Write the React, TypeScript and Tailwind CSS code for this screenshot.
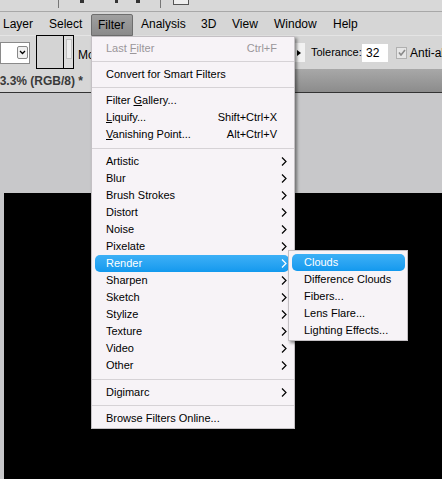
import React from "react";

const Chevron = ({ color = "#000" }: { color?: string }) => (
  <svg width="6" height="9" viewBox="0 0 6 9" className="shrink-0">
    <polyline points="1,0.5 5,4.5 1,8.5" fill="none" stroke={color} strokeWidth="1.2" />
  </svg>
);

type Item =
  | { kind: "sep"; tall?: boolean }
  | { kind: "item"; label: React.ReactNode; shortcut?: string; arrow?: boolean; disabled?: boolean; active?: boolean };

const items: Item[] = [
  { kind: "item", label: <>Last <u>F</u>ilter</>, shortcut: "Ctrl+F", disabled: true },
  { kind: "sep" },
  { kind: "item", label: "Convert for Smart Filters" },
  { kind: "sep" },
  { kind: "item", label: <>Filter <u>G</u>allery...</> },
  { kind: "item", label: <><u>L</u>iquify...</>, shortcut: "Shift+Ctrl+X" },
  { kind: "item", label: <><u>V</u>anishing Point...</>, shortcut: "Alt+Ctrl+V" },
  { kind: "sep", tall: true },
  { kind: "item", label: "Artistic", arrow: true },
  { kind: "item", label: "Blur", arrow: true },
  { kind: "item", label: "Brush Strokes", arrow: true },
  { kind: "item", label: "Distort", arrow: true },
  { kind: "item", label: "Noise", arrow: true },
  { kind: "item", label: "Pixelate", arrow: true },
  { kind: "item", label: "Render", arrow: true, active: true },
  { kind: "item", label: "Sharpen", arrow: true },
  { kind: "item", label: "Sketch", arrow: true },
  { kind: "item", label: "Stylize", arrow: true },
  { kind: "item", label: "Texture", arrow: true },
  { kind: "item", label: "Video", arrow: true },
  { kind: "item", label: "Other", arrow: true },
  { kind: "sep", tall: true },
  { kind: "item", label: "Digimarc", arrow: true },
  { kind: "sep" },
  { kind: "item", label: "Browse Filters Online..." },
];

const sub = ["Clouds", "Difference Clouds", "Fibers...", "Lens Flare...", "Lighting Effects..."];

export default function App() {
  return (
    <div className="relative w-[442px] h-[479px] overflow-hidden bg-[#c8c8ca] flex flex-col font-['Liberation_Sans',Arial,sans-serif] text-[11px] text-black leading-none">
      {/* top strip */}
      <div className="h-[12px] shrink-0 bg-[#d8d8d8] border-b border-[#a8a8a8] flex items-start">
        <div className="ml-[58px] w-px h-[8px] bg-[#777]" />
        <div className="ml-[21px] w-[4px] h-[3px] bg-[#333]" />
        <div className="ml-[31px] w-[3px] h-[3px] bg-[#333]" />
        <div className="ml-[18px] w-[4px] h-[3px] bg-[#333]" />
        <div className="ml-[20px] w-px h-[8px] bg-[#777]" />
        <div className="ml-[12px] w-[16px] h-[5px] border border-t-0 border-[#555] bg-[#eee]" />
      </div>

      {/* menu bar */}
      <div className="h-[24px] shrink-0 bg-[#d6d6d6] flex items-center text-[12px] border-b border-[#e4e4e4]">
        <div className="w-[46px] pl-[3px]">Layer</div>
        <div className="w-[45px] pl-[3px]">Select</div>
        <div className="w-[42px] h-[22px] mt-[2px] self-start pl-[6px] flex items-center rounded-t-[2px] border border-[#6e6e6e] bg-linear-to-b from-[#a0a0a0] to-[#8a8a8a]">Filter</div>
        <div className="w-[62px] pl-[8px]">Analysis</div>
        <div className="w-[31px] pl-[6px]">3D</div>
        <div className="w-[42px] pl-[6px]">View</div>
        <div className="w-[53px] pl-[6px]">Window</div>
        <div className="pl-[12px]">Help</div>
      </div>

      {/* options bar */}
      <div className="h-[33px] shrink-0 bg-[#d6d6d6] flex items-center">
        <div className="shrink-0 w-[30px] h-[22px] bg-white border border-[#8a8a8a] flex items-center justify-end pr-[1px]">
          <div className="w-[11px] h-[13px] border border-[#888] rounded-[2px] bg-[#f0f0f0] flex items-center justify-center">
            <svg width="7" height="5" viewBox="0 0 7 5"><polyline points="1,1 3.5,3.5 6,1" fill="none" stroke="#000" strokeWidth="1.3" /></svg>
          </div>
        </div>
        <div className="shrink-0 ml-[6px] w-[38px] h-[34px] self-start -mt-[1px] border border-black bg-[#d4d4d4] flex justify-end">
          <div className="w-[10px] h-full border-l border-black bg-[#dcdcdc] flex justify-center pt-[3px]">
            <div className="w-[6px] h-[20px] bg-[#eeeeee] border border-[#c0c0c0]" />
          </div>
        </div>
        <div className="shrink-0 ml-[4px] mt-[4px] w-[17px] text-[12px] whitespace-nowrap">Mo</div>
        <div className="shrink-0 ml-[197px] flex items-center">
          <div className="w-[13px] h-[19px] bg-[#f2f2f2] flex items-center justify-center">
            <svg width="4" height="6" viewBox="0 0 4 6"><polygon points="0,0 4,3 0,6" fill="#000" /></svg>
          </div>
          <div className="ml-[6px] text-[11px] w-[51px]">Tolerance:</div>
          <div className="w-[26px] h-[18px] bg-white flex items-center pl-[4px] text-[12px]">32</div>
          <div className="ml-[8px] w-[11px] h-[12px] bg-[#e6e6e6] border border-[#b0b0b0] flex items-center justify-center">
            <svg width="8" height="7" viewBox="0 0 8 7"><polyline points="1,3.5 3,6 7,1" fill="none" stroke="#8a8a8a" strokeWidth="1.6" /></svg>
          </div>
          <div className="ml-[3px] text-[12px] whitespace-nowrap">Anti-alias</div>
        </div>
      </div>

      {/* tab bar */}
      <div className="h-[23px] shrink-0 bg-linear-to-b from-[#a8a8a8] to-[#8c8c8c] flex">
        <div className="w-[100px] bg-[#d6d6d6] flex items-center overflow-hidden pt-[1px]">
          <span className="-ml-[7px] font-bold text-[12px] text-[#3a3a3a] whitespace-nowrap">33.3% (RGB/8) *</span>
        </div>
      </div>
      <div className="h-px shrink-0 bg-[#333]" />

      {/* canvas area */}
      <div className="flex-1 flex flex-col pl-[4px] pt-[100px]">
        <div className="flex-1 bg-black" />
      </div>

      {/* Filter menu */}
      <div className="absolute left-[91px] top-[36px] w-[204px] bg-[#f7f3f7] border border-[#c4c0c4] pt-[3px] pb-px shadow-[2px_2px_3px_rgba(0,0,0,0.45)]">
        {items.map((it, i) =>
          it.kind === "sep" ? (
            <div key={i} className={`${it.tall ? "h-[10px]" : "h-[9px]"} flex items-center`}>
              <div className="w-full h-px bg-[#d6d2d6]" />
            </div>
          ) : (
            <div
              key={i}
              className={`h-[17px] ml-[3px] mr-[5px] pl-[11px] flex items-center justify-between rounded-[5px] ${
                it.active ? "bg-linear-to-b from-[#3cb0f6] to-[#1199ee] text-white" : ""
              } ${it.disabled ? "text-[#9a969a]" : ""} ${it.shortcut ? "pr-[12px]" : "pr-[2px]"}`}
            >
              <span className="whitespace-nowrap">{it.label}</span>
              {it.shortcut && <span className="whitespace-nowrap">{it.shortcut}</span>}
              {it.arrow && <Chevron color={it.active ? "#fff" : "#000"} />}
            </div>
          )
        )}
      </div>

      {/* Render submenu */}
      <div className="absolute left-[288px] top-[250px] w-[120px] bg-[#f7f3f7] border border-[#c4c0c4] pt-[3px] pb-px shadow-[2px_2px_3px_rgba(0,0,0,0.45)]">
        {sub.map((s, i) => (
          <div
            key={s}
            className={`h-[17px] ml-[3px] mr-[2px] pl-[12px] flex items-center rounded-[5px] whitespace-nowrap ${
              i === 0 ? "bg-linear-to-b from-[#3cb0f6] to-[#1199ee] text-white" : ""
            }`}
          >
            {s}
          </div>
        ))}
      </div>
    </div>
  );
}
